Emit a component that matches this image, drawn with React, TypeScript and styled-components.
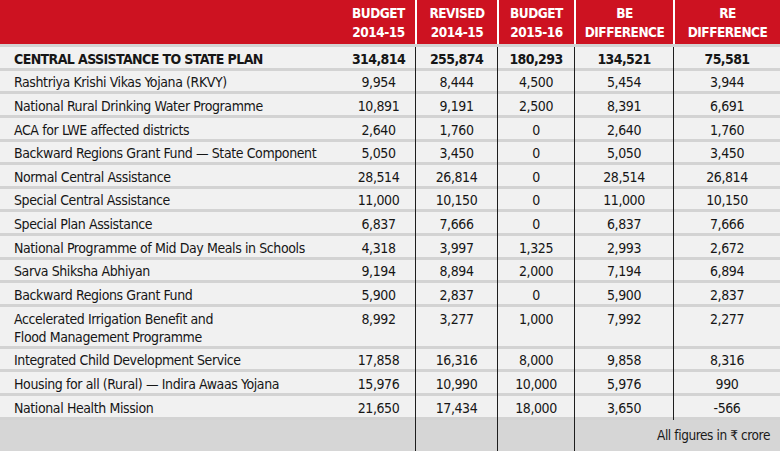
import React from "react";
import styled, { createGlobalStyle, css } from "styled-components";

const Global = createGlobalStyle`
  html, body { margin: 0; padding: 0; background: #ffffff; }
  body { font-family: "DejaVu Sans Condensed", "DejaVu Sans", "Liberation Sans", sans-serif; font-stretch: condensed; }
`;

const COLS = "342px 73px 82px 77px 99px 107px";

const Table = styled.div`
  width: 780px;
  height: 451px;
  display: flex;
  flex-direction: column;
  background: #f1f1f1;
  color: #161616;
  overflow: hidden;
`;

const Header = styled.div`
  flex: none;
  display: grid;
  grid-template-columns: ${COLS};
  height: 44px;
  background: #cd1221;
  border-bottom: 3px solid #d3d3d3;
`;

const HeadCell = styled.div<{ $sep?: boolean }>`
  display: flex;
  align-items: center;
  justify-content: center;
  text-align: center;
  color: #ffffff;
  font-weight: 700;
  font-size: 13.5px;
  letter-spacing: -0.5px;
  line-height: 19px;
  padding-top: 2px;
  ${(p) => p.$sep && css`border-left: 2px solid #ffffff;`}
`;

const Row = styled.div<{ $bold?: boolean }>`
  flex: none;
  display: grid;
  grid-template-columns: ${COLS};
  border-bottom: 3px solid #d3d3d3;
  font-size: 14px;
  font-weight: ${(p) => (p.$bold ? 700 : 400)};
  letter-spacing: ${(p) => (p.$bold ? "-0.6px" : "-0.4px")};
  line-height: 18px;
  white-space: nowrap;
`;

const Label = styled.div`
  padding: 2.6px 0 0.05px 14px;
`;

const Num = styled.div<{ $sep?: boolean }>`
  text-align: center;
  padding: 2.6px 0 3.05px 0;
  margin-bottom: -3px;
  ${(p) => p.$sep && css`border-left: 1px solid #1e1e1e;`}
`;

const Footer = styled.div`
  flex: 1;
  display: grid;
  grid-template-columns: 415px 82px 77px 206px;
  background: #d6d6d6;
`;

const FootCell = styled.div<{ $sep?: boolean }>`
  ${(p) => p.$sep && css`border-left: 1px solid #1e1e1e;`}
`;

const Note = styled(FootCell)`
  text-align: right;
  font-size: 13.5px;
  letter-spacing: -0.4px;
  line-height: 18px;
  padding: 6px 10px 0 0;
  color: #1a1a1a;
`;

type R = { label: string; v: string[]; bold?: boolean };

const rows: R[] = [
  { label: "CENTRAL ASSISTANCE TO STATE PLAN", v: ["314,814", "255,874", "180,293", "134,521", "75,581"], bold: true },
  { label: "Rashtriya Krishi Vikas Yojana (RKVY)", v: ["9,954", "8,444", "4,500", "5,454", "3,944"] },
  { label: "National Rural Drinking Water Programme", v: ["10,891", "9,191", "2,500", "8,391", "6,691"] },
  { label: "ACA for LWE affected districts", v: ["2,640", "1,760", "0", "2,640", "1,760"] },
  { label: "Backward Regions Grant Fund \u2014 State Component", v: ["5,050", "3,450", "0", "5,050", "3,450"] },
  { label: "Normal Central Assistance", v: ["28,514", "26,814", "0", "28,514", "26,814"] },
  { label: "Special Central Assistance", v: ["11,000", "10,150", "0", "11,000", "10,150"] },
  { label: "Special Plan Assistance", v: ["6,837", "7,666", "0", "6,837", "7,666"] },
  { label: "National Programme of Mid Day Meals in Schools", v: ["4,318", "3,997", "1,325", "2,993", "2,672"] },
  { label: "Sarva Shiksha Abhiyan", v: ["9,194", "8,894", "2,000", "7,194", "6,894"] },
  { label: "Backward Regions Grant Fund", v: ["5,900", "2,837", "0", "5,900", "2,837"] },
  { label: "Accelerated Irrigation Benefit and\nFlood Management Programme", v: ["8,992", "3,277", "1,000", "7,992", "2,277"] },
  { label: "Integrated Child Development Service", v: ["17,858", "16,316", "8,000", "9,858", "8,316"] },
  { label: "Housing for all (Rural) \u2014 Indira Awaas Yojana", v: ["15,976", "10,990", "10,000", "5,976", "990"] },
  { label: "National Health Mission", v: ["21,650", "17,434", "18,000", "3,650", "-566"] },
];

export default function App() {
  return (
    <>
      <Global />
      <Table>
        <Header>
          <HeadCell />
          <HeadCell>BUDGET<br />2014-15</HeadCell>
          <HeadCell $sep>REVISED<br />2014-15</HeadCell>
          <HeadCell $sep>BUDGET<br />2015-16</HeadCell>
          <HeadCell $sep>BE<br />DIFFERENCE</HeadCell>
          <HeadCell $sep>RE<br />DIFFERENCE</HeadCell>
        </Header>
        {rows.map((r) => (
          <Row key={r.label} $bold={r.bold}>
            <Label>
              {r.label.split("\n").map((l, i) => (
                <div key={i}>{l}</div>
              ))}
            </Label>
            {r.v.map((n, i) => (
              <Num key={i} $sep={i > 0}>{n}</Num>
            ))}
          </Row>
        ))}
        <Footer>
          <FootCell />
          <FootCell $sep />
          <FootCell $sep />
          <Note $sep>All figures in ₹ crore</Note>
        </Footer>
      </Table>
    </>
  );
}
